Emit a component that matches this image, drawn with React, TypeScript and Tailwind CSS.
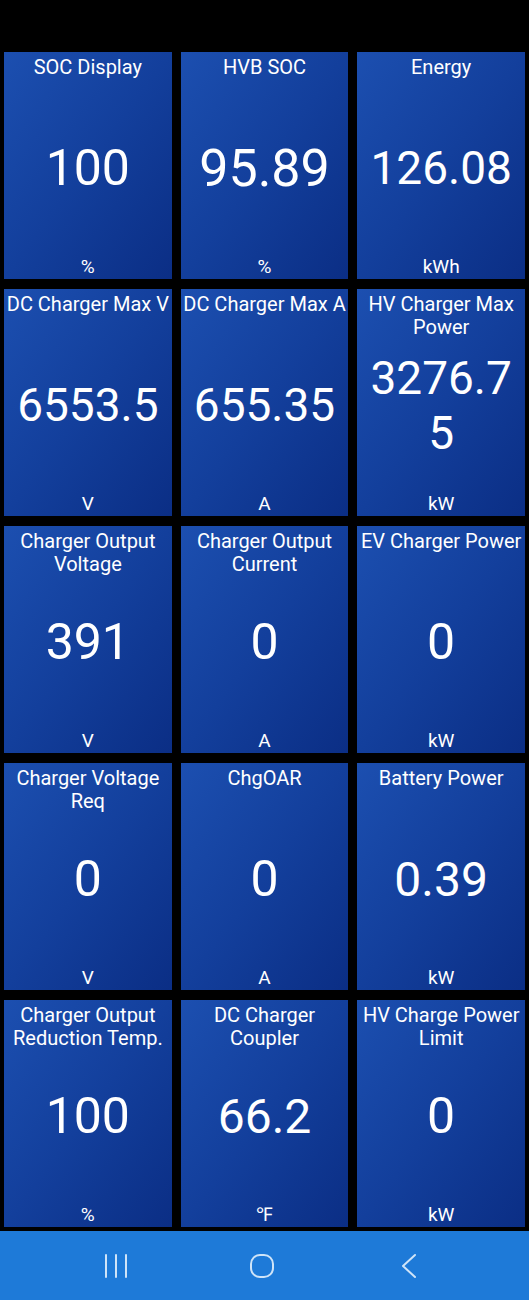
const tiles = [
  { label: "SOC Display", value: "100", unit: "%", size: "text-[50px]" },
  { label: "HVB SOC", value: "95.89", unit: "%", size: "text-[52px]" },
  { label: "Energy", value: "126.08", unit: "kWh", size: "text-[46px]" },
  { label: "DC Charger Max V", value: "6553.5", unit: "V", size: "text-[46px]" },
  { label: "DC Charger Max A", value: "655.35", unit: "A", size: "text-[46px]" },
  { label: "HV Charger Max Power", value: "3276.75", unit: "kW", size: "text-[46px]" },
  { label: "Charger Output Voltage", value: "391", unit: "V", size: "text-[50px]" },
  { label: "Charger Output Current", value: "0", unit: "A", size: "text-[50px]" },
  { label: "EV Charger Power", value: "0", unit: "kW", size: "text-[50px]" },
  { label: "Charger Voltage Req", value: "0", unit: "V", size: "text-[50px]" },
  { label: "ChgOAR", value: "0", unit: "A", size: "text-[50px]" },
  { label: "Battery Power", value: "0.39", unit: "kW", size: "text-[48px]" },
  { label: "Charger Output Reduction Temp.", value: "100", unit: "%", size: "text-[50px]" },
  { label: "DC Charger Coupler", value: "66.2", unit: "℉", size: "text-[48px]" },
  { label: "HV Charge Power Limit", value: "0", unit: "kW", size: "text-[50px]" },
];

function Tile({ label, value, unit, size }: { label: string; value: string; unit: string; size: string }) {
  return (
    <div className="grid h-[227px] bg-gradient-to-br from-[#1c4fb0] via-[#133f9c] to-[#0b2e85] text-center text-white">
      <div className="col-start-1 row-start-1 self-start px-[2px] pt-[4px] text-[20px] leading-[23px]">
        {label}
      </div>
      <div className={`col-start-1 row-start-1 self-center break-all px-[2px] pt-[6px] leading-[55px] ${size}`}>
        {value}
      </div>
      <div className="col-start-1 row-start-1 self-end pb-[1px] text-[19px] leading-[22px]">
        {unit}
      </div>
    </div>
  );
}

export default function App() {
  return (
    <div className="min-h-[1300px] bg-black font-['Roboto',sans-serif]">
      <div className="grid grid-cols-3 gap-x-[9px] gap-y-[10px] px-[4px] pb-[4px] pt-[52px]">
        {tiles.map((t) => (
          <Tile key={t.label} {...t} />
        ))}
      </div>

      <div className="flex h-[69px] items-center gap-[120px] bg-[#1e7ad8] pl-[103px]">
        <svg width="26" height="26" viewBox="0 0 26 26" fill="none" stroke="#cfe4f8" strokeWidth="2" strokeLinecap="round">
          <path d="M3 2v22M13 2v22M23 2v22" />
        </svg>
        <svg width="26" height="26" viewBox="0 0 26 26" fill="none" stroke="#cfe4f8" strokeWidth="2">
          <rect x="2" y="2" width="22" height="22" rx="9" />
        </svg>
        <svg width="26" height="26" viewBox="0 0 26 26" fill="none" stroke="#cfe4f8" strokeWidth="2" strokeLinecap="round" strokeLinejoin="round">
          <path d="M20 2L8 13l12 11" />
        </svg>
      </div>
    </div>
  );
}
